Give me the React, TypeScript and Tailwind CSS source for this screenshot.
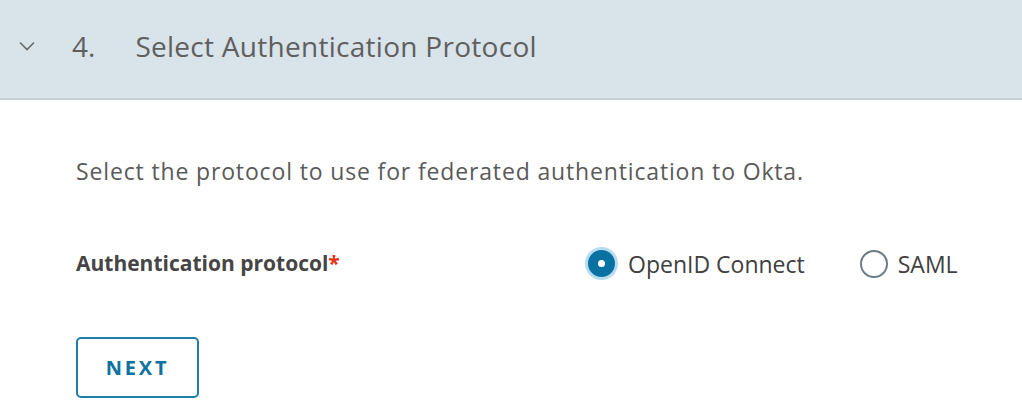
import { useState } from 'react'

const font = { fontFamily: '"Open Sans", "Liberation Sans", sans-serif' }

function Radio({ checked, label, onClick }: { checked: boolean; label: string; onClick: () => void }) {
  return (
    <button type="button" onClick={onClick} className="flex items-center gap-[10px]">
      {checked ? (
        <span className="flex h-[33px] w-[33px] items-center justify-center rounded-full bg-[#b7dcf2]">
          <span className="flex h-[27px] w-[27px] items-center justify-center rounded-full bg-[#0a72a2]">
            <span className="h-[7px] w-[7px] rounded-full bg-white" />
          </span>
        </span>
      ) : (
        <span className="h-[28px] w-[28px] rounded-full border-2 border-[#6b7c87] bg-white" />
      )}
      <span className="text-[23px] text-[#404040]">{label}</span>
    </button>
  )
}

export default function App() {
  const [protocol, setProtocol] = useState('oidc')

  return (
    <div className="h-[415px] w-[1022px] overflow-hidden bg-white" style={font}>
      {/* step header */}
      <div className="flex h-[100px] items-center border-b-2 border-[#c9d0d5] bg-[#d8e3ea] pb-[6px]">
        <svg className="ml-[19px] h-[10px] w-[16px]" viewBox="0 0 16 10" fill="none">
          <path d="M1 1.5 L8 8.5 L15 1.5" stroke="#6a6a6a" strokeWidth="1.6" />
        </svg>
        <span className="ml-[37px] text-[28px] text-[#5f5f5f]">4.</span>
        <span className="ml-[40px] text-[28px] tracking-[0.01em] text-[#5f5f5f]">Select Authentication Protocol</span>
      </div>

      <div className="pl-[76px] pt-[54px]">
        <p className="text-[23px] tracking-[0.037em] text-[#5a5a5a]">
          Select the protocol to use for federated authentication to Okta.
        </p>

        <div className="mt-[58px] flex items-center">
          <div className="w-[509px] text-[21px] font-bold text-[#454545]">
            Authentication protocol<span className="text-[#e8340f]">*</span>
          </div>
          <div className="flex items-center gap-[55px]">
            <Radio checked={protocol === 'oidc'} label="OpenID Connect" onClick={() => setProtocol('oidc')} />
            <Radio checked={protocol === 'saml'} label="SAML" onClick={() => setProtocol('saml')} />
          </div>
        </div>

        <button
          type="button"
          className="mt-[56px] h-[61px] w-[123px] rounded-[5px] border-2 border-[#1c7fa8] text-[20px] font-bold tracking-[0.14em] text-[#0c72a0]"
        >
          NEXT
        </button>
      </div>
    </div>
  )
}
